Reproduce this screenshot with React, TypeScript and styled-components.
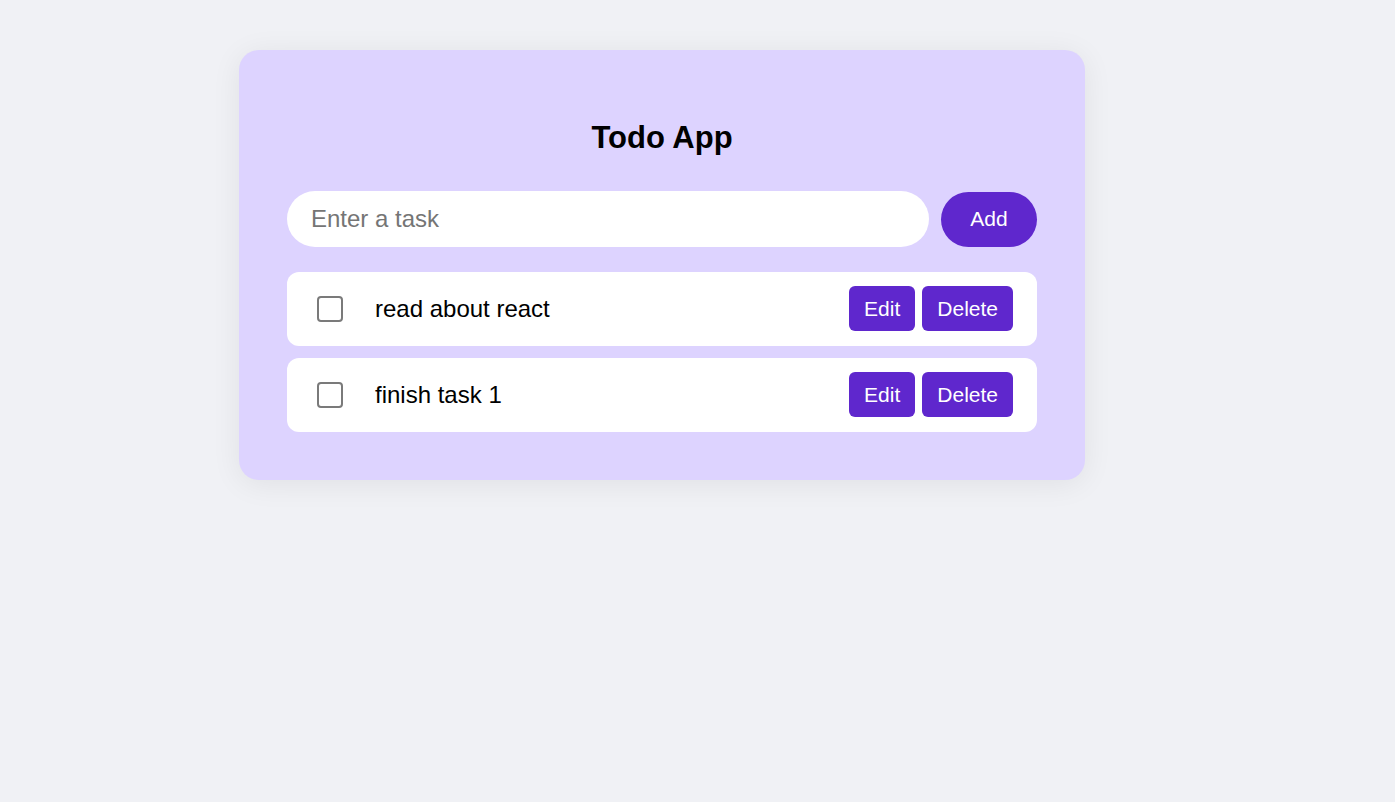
import React, { useState } from "react";
import styled, { createGlobalStyle } from "styled-components";

const GlobalStyle = createGlobalStyle`
  html, body {
    margin: 0;
    padding: 0;
    background: #f0f1f5;
    font-family: "Liberation Sans", Arial, sans-serif;
  }
`;

const Page = styled.div`
  min-height: 100vh;
  box-sizing: border-box;
  padding: 50px 0 0 239px;
`;

const Card = styled.div`
  width: 846px;
  box-sizing: border-box;
  padding: 48px;
  background: #ddd3ff;
  border-radius: 20px;
  box-shadow: 0 4px 30px rgba(0, 0, 0, 0.07);
  display: flex;
  flex-direction: column;
`;

const Title = styled.h1`
  margin: 22px 0 35px;
  text-align: center;
  font-size: 31px;
  line-height: 36px;
  font-weight: 700;
  color: #000;
`;

const InputRow = styled.div`
  display: flex;
  gap: 12px;
  align-items: center;
  margin-bottom: 25px;
`;

const TaskInput = styled.input`
  flex: 1;
  height: 56px;
  box-sizing: border-box;
  border: none;
  outline: none;
  border-radius: 28px;
  padding: 0 24px;
  font-family: inherit;
  font-size: 24px;
  background: #fff;
  color: #000;
  &::placeholder {
    color: #757575;
  }
`;

const AddButton = styled.button`
  width: 96px;
  height: 55px;
  border: none;
  border-radius: 28px;
  background: #5f27cd;
  color: #fff;
  font-family: inherit;
  font-size: 21px;
  cursor: pointer;
`;

const List = styled.div`
  display: flex;
  flex-direction: column;
  gap: 12px;
`;

const Item = styled.div`
  display: flex;
  align-items: center;
  height: 74px;
  box-sizing: border-box;
  padding: 0 24px 0 30px;
  background: #fff;
  border-radius: 12px;
`;

const Check = styled.input`
  appearance: none;
  margin: 0 32px 0 0;
  width: 26px;
  height: 26px;
  box-sizing: border-box;
  border: 2px solid #7a7a7a;
  border-radius: 4px;
  background: #fff;
  flex-shrink: 0;
  &:checked {
    background: #5f27cd;
    border-color: #5f27cd;
  }
`;

const ItemText = styled.span<{ $done: boolean }>`
  flex: 1;
  font-size: 24px;
  color: #000;
  text-decoration: ${(p) => (p.$done ? "line-through" : "none")};
`;

const Actions = styled.div`
  display: flex;
  gap: 7px;
  margin-bottom: 1px;
`;

const SmallButton = styled.button`
  height: 45px;
  padding: 0 15px;
  border: none;
  border-radius: 6px;
  background: #5f27cd;
  color: #fff;
  font-family: inherit;
  font-size: 21px;
  cursor: pointer;
`;

export default function App() {
  const [todos, setTodos] = useState([
    { id: 1, text: "read about react", done: false },
    { id: 2, text: "finish task 1", done: false },
  ]);
  const [value, setValue] = useState("");

  return (
    <>
      <GlobalStyle />
      <Page>
        <Card>
          <Title>Todo App</Title>
          <InputRow>
            <TaskInput
              placeholder="Enter a task"
              value={value}
              onChange={(e) => setValue(e.target.value)}
            />
            <AddButton
              onClick={() => {
                if (!value.trim()) return;
                setTodos([...todos, { id: Date.now(), text: value, done: false }]);
                setValue("");
              }}
            >
              Add
            </AddButton>
          </InputRow>
          <List>
            {todos.map((t) => (
              <Item key={t.id}>
                <Check
                  type="checkbox"
                  checked={t.done}
                  onChange={() =>
                    setTodos(todos.map((x) => (x.id === t.id ? { ...x, done: !x.done } : x)))
                  }
                />
                <ItemText $done={t.done}>{t.text}</ItemText>
                <Actions>
                  <SmallButton>Edit</SmallButton>
                  <SmallButton onClick={() => setTodos(todos.filter((x) => x.id !== t.id))}>
                    Delete
                  </SmallButton>
                </Actions>
              </Item>
            ))}
          </List>
        </Card>
      </Page>
    </>
  );
}
